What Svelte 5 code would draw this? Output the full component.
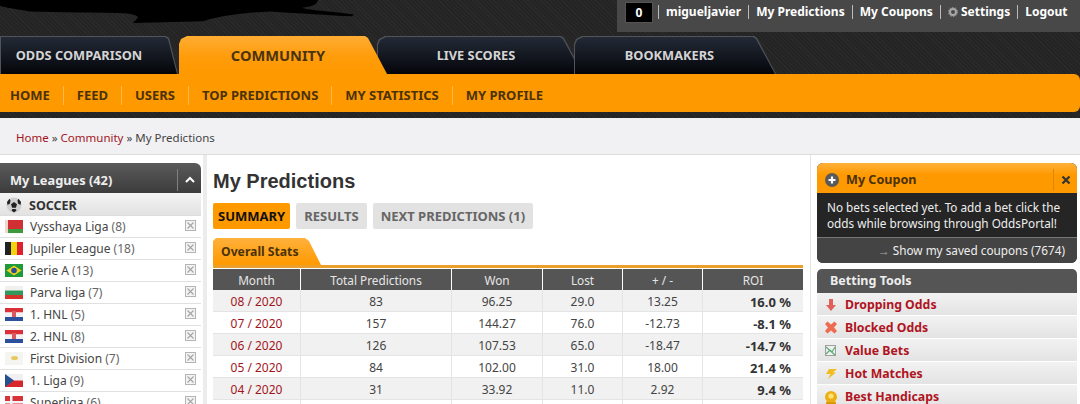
<script>
  const mainTabs = [
    { label: 'ODDS COMPARISON', cls: 'odds' },
    { label: 'COMMUNITY', cls: 'community' },
    { label: 'LIVE SCORES', cls: 'live' },
    { label: 'BOOKMAKERS', cls: 'books' }
  ];
  const subNav = ['HOME', 'FEED', 'USERS', 'TOP PREDICTIONS', 'MY STATISTICS', 'MY PROFILE'];
  const leagues = [
    { flag: 'by', name: 'Vysshaya Liga', count: 8 },
    { flag: 'be', name: 'Jupiler League', count: 18 },
    { flag: 'br', name: 'Serie A', count: 13 },
    { flag: 'bg', name: 'Parva liga', count: 7 },
    { flag: 'hr', name: '1. HNL', count: 5 },
    { flag: 'hr', name: '2. HNL', count: 8 },
    { flag: 'cy', name: 'First Division', count: 7 },
    { flag: 'cz', name: '1. Liga', count: 9 },
    { flag: 'dk', name: 'Superliga', count: 6 }
  ];
  const stats = [
    ['08 / 2020', '83', '96.25', '29.0', '13.25', '16.0 %'],
    ['07 / 2020', '157', '144.27', '76.0', '-12.73', '-8.1 %'],
    ['06 / 2020', '126', '107.53', '65.0', '-18.47', '-14.7 %'],
    ['05 / 2020', '84', '102.00', '31.0', '18.00', '21.4 %'],
    ['04 / 2020', '31', '33.92', '11.0', '2.92', '9.4 %'],
    ['', '', '', '', '', '']
  ];
  const tools = ['Dropping Odds', 'Blocked Odds', 'Value Bets', 'Hot Matches', 'Best Handicaps'];
</script>

{#snippet flag(code)}
  <svg class="flag" viewBox="0 0 18 13" aria-hidden="true">
    {#if code === 'by'}
      <rect width="18" height="13" fill="#d22f35" />
      <rect y="9" width="18" height="4" fill="#3c9a3c" />
      <rect width="3" height="13" fill="#f3d5d0" />
    {:else if code === 'be'}
      <rect width="6" height="13" fill="#222" />
      <rect x="6" width="6" height="13" fill="#f5d40f" />
      <rect x="12" width="6" height="13" fill="#e0202c" />
    {:else if code === 'br'}
      <rect width="18" height="13" fill="#1f9a3a" />
      <polygon points="9,1.5 16.5,6.5 9,11.5 1.5,6.5" fill="#f0d020" />
      <circle cx="9" cy="6.5" r="2.8" fill="#2a4f94" />
    {:else if code === 'bg'}
      <rect width="18" height="4.5" fill="#f0f0ec" />
      <rect y="4.5" width="18" height="4.5" fill="#2f9a5c" />
      <rect y="9" width="18" height="4" fill="#d5342a" />
    {:else if code === 'hr'}
      <rect width="18" height="4.5" fill="#dc3038" />
      <rect y="4.5" width="18" height="4.5" fill="#f2f2f2" />
      <rect y="9" width="18" height="4" fill="#2c4f9e" />
      <rect x="7" y="3" width="4" height="6" fill="#d85a60" />
    {:else if code === 'cy'}
      <rect width="18" height="13" fill="#f4f4f0" />
      <ellipse cx="9.5" cy="6" rx="3.5" ry="2" fill="#e8c860" />
    {:else if code === 'cz'}
      <rect width="18" height="6.5" fill="#f0f0f2" />
      <rect y="6.5" width="18" height="6.5" fill="#d8262e" />
      <polygon points="0,0 9,6.5 0,13" fill="#27508f" />
    {:else}
      <rect width="18" height="13" fill="#d8323a" />
      <rect x="5" width="2.5" height="13" fill="#f2f2f2" />
      <rect y="5" width="18" height="2.5" fill="#f2f2f2" />
    {/if}
  </svg>
{/snippet}

{#snippet toolIcon(i)}
  <svg class="tool-icon" viewBox="0 0 14 16" aria-hidden="true">
    {#if i === 0}
      <path d="M5 2h4v6h3l-5 6-5-6h3z" fill="#e0605a" />
    {:else if i === 1}
      <path d="M1 4l2.500-2.500 3.500 3 3.500-3L13 4l-3 3.500 3 3.500-2.500 2.500-3.500-3-3.500 3L1 11l3-3.500z" fill="#ee6a50" />
    {:else if i === 2}
      <rect x="1.500" y="2.500" width="10" height="10" fill="#eef2ee" stroke="#a0a0a0" />
      <path d="M2 4l9 8M2 11l4-4 2 2 3-5" fill="none" stroke="#5fa87a" stroke-width="1.200" />
    {:else if i === 3}
      <path d="M5 3h8L9 6.500h3L4 13l2.500-5H2z" fill="#f0bd20" />
    {:else}
      <circle cx="7" cy="8" r="6" fill="#eeb010" />
      <circle cx="7" cy="7" r="2.600" fill="#fbe27a" />
      <rect x="2" y="13" width="10" height="3" fill="#d89a08" />
    {/if}
  </svg>
{/snippet}

<div class="page">
  <header class="top">
    <svg class="scribble" viewBox="0 0 360 26" preserveAspectRatio="none" aria-hidden="true">
      <path d="M0 0H318C317 5 312 7 302 8C310 11 335 12 354 15L352 17C330 16 300 14 270 12C250 13 225 15 203 22L133 24C135 20 145 17 128 14C100 13 60 13 30 12C15 9 5 8 0 6Z" fill="#000" />
    </svg>
    <div class="userbar">
      <span class="counter">0</span>
      <a href="#u" class="first">migueljavier</a>
      <a href="#p">My Predictions</a>
      <a href="#c">My Coupons</a>
      <a href="#s">
        <svg class="gear" viewBox="0 0 10 10" aria-hidden="true">
          <circle cx="5" cy="5" r="3" fill="none" stroke="#a8a8a8" stroke-width="2" />
          <circle cx="5" cy="5" r="4.600" fill="none" stroke="#a8a8a8" stroke-width="1" stroke-dasharray="1.400 1.500" />
        </svg>
        Settings
      </a>
      <a href="#l">Logout</a>
    </div>
    <nav class="tabs">
      {#each mainTabs as tab}
        <a href="#t" class="tab {tab.cls}"><span>{tab.label}</span></a>
      {/each}
    </nav>
    <nav class="subnav">
      {#each subNav as item}
        <a href="#n">{item}</a>
      {/each}
    </nav>
  </header>

  <div class="crumbs">
    <a href="#h">Home</a> » <a href="#c">Community</a> » My Predictions
  </div>

  <div class="columns">
    <aside class="left">
      <div class="box-head">
        <span>My Leagues (42)</span>
        <span class="collapse">
          <svg viewBox="0 0 10 7" width="10" height="7" aria-hidden="true">
            <path d="M1 6l4-4 4 4" fill="none" stroke="#fff" stroke-width="2" />
          </svg>
        </span>
      </div>
      <div class="sport">
        <svg class="ball" viewBox="0 0 16 16" aria-hidden="true">
          <circle cx="8" cy="8" r="7.500" fill="#cfcfcf" />
          <path d="M8 5l3 2.200-1.100 3.500H6.100L5 7.200zM3.500 1.800L1 5l.5 3 2.500-1.500.5-3zM12.500 1.800L15 5l-.5 3L12 6.500l-.5-3zM5.500 13.500l2.500 2 2.500-2-1-1.500h-3z" fill="#222" />
        </svg>
        SOCCER
      </div>
      <ul class="leagues">
        {#each leagues as league}
          <li>
            {@render flag(league.flag)}
            <span class="league-name">{league.name} <span class="count">({league.count})</span></span>
            <svg class="remove" viewBox="0 0 11 11" aria-hidden="true">
              <rect x=".5" y=".5" width="10" height="10" fill="#f3f3f3" stroke="#b4b4b4" />
              <path d="M2.500 2.500l6 6M8.500 2.500l-6 6" stroke="#a4a4a4" stroke-width="1.100" />
            </svg>
          </li>
        {/each}
      </ul>
    </aside>

    <main class="content">
      <h1>My Predictions</h1>
      <div class="pills">
        <a href="#s" class="pill active">SUMMARY</a>
        <a href="#r" class="pill">RESULTS</a>
        <a href="#x" class="pill">NEXT PREDICTIONS (1)</a>
      </div>
      <div class="stats-tab"><span>Overall Stats</span></div>
      <table>
        <thead>
          <tr>
            <th class="c-month">Month</th>
            <th class="c-total">Total Predictions</th>
            <th class="c-won">Won</th>
            <th class="c-lost">Lost</th>
            <th class="c-diff">+ / -</th>
            <th>ROI</th>
          </tr>
        </thead>
        <tbody>
          {#each stats as row}
            <tr>
              <td class="month">{row[0]}</td>
              <td>{row[1]}</td>
              <td>{row[2]}</td>
              <td>{row[3]}</td>
              <td>{row[4]}</td>
              <td class="roi">{row[5]}</td>
            </tr>
          {/each}
        </tbody>
      </table>
    </main>

    <aside class="right">
      <section class="coupon">
        <div class="coupon-head">
          <svg class="plus" viewBox="0 0 14 14" aria-hidden="true">
            <circle cx="7" cy="7" r="7" fill="#5a5a5a" />
            <path d="M7 3.500v7M3.500 7h7" stroke="#fff" stroke-width="2.200" />
          </svg>
          <span class="coupon-title">My Coupon</span>
          <span class="coupon-close">
            <svg viewBox="0 0 10 10" width="10" height="10" aria-hidden="true">
              <path d="M1.500 1.500l7 7M8.500 1.500l-7 7" stroke="#333" stroke-width="2.200" />
            </svg>
          </span>
        </div>
        <p class="coupon-text">No bets selected yet. To add a bet click the odds while browsing through OddsPortal!</p>
        <a href="#saved" class="coupon-saved"><span class="arrow">→</span> Show my saved coupons (7674)</a>
      </section>
      <section class="tools">
        <h2>Betting Tools</h2>
        {#each tools as tool, i}
          <a href="#b" class="tool">{@render toolIcon(i)}{tool}</a>
        {/each}
      </section>
    </aside>
  </div>
</div>

<style>
  :global(body) {
    background: #fff;
    overflow: hidden;
  }

  .page {
    width: 1080px;
    height: 404px;
    overflow: hidden;
    font-family: "Noto Sans", sans-serif;
    font-size: 12px;
    color: #333;
  }

  a {
    text-decoration: none;
    color: inherit;
  }

  /* header */
  .top {
    position: relative;
    height: 118px;
    box-sizing: border-box;
    padding-top: 36px;
    background-color: #242424;
    background-image: repeating-linear-gradient(45deg, #2a2a2a 0 1px, transparent 1px 3px);
  }

  .scribble {
    position: absolute;
    left: 0;
    top: 0;
    width: 360px;
    height: 25px;
  }

  .userbar {
    position: absolute;
    right: 0;
    top: 0;
    width: 463px;
    height: 32px;
    box-sizing: border-box;
    padding: 0 0 8px 8px;
    display: flex;
    align-items: center;
    background: #484848;
    color: #fff;
    font-weight: bold;
    font-size: 12px;
  }

  .counter {
    width: 28px;
    height: 21px;
    margin-right: 5px;
    background: #000;
    border: 1px solid #555;
    box-sizing: border-box;
    text-align: center;
    line-height: 19px;
  }

  .userbar a {
    padding: 0 7px;
    border-left: 1px solid #bbb;
    line-height: 14px;
    white-space: nowrap;
  }

  .gear {
    width: 10px;
    height: 10px;
    vertical-align: -1px;
  }

  .tabs {
    display: flex;
    height: 38px;
    align-items: stretch;
  }

  .tab {
    position: relative;
    display: flex;
    align-items: center;
    justify-content: center;
    box-sizing: border-box;
    height: 38px;
    color: #d4d4d4;
    font-weight: bold;
    font-size: 12.800px;
    background: #50545a;
    clip-path: polygon(0 8px, 2px 3px, 8px 0, calc(100% - 22px) 0, calc(100% - 19px) 2px, 100% 100%, 0 100%);
  }

  /* inner face of the tab, the parent shows through as its thin outline */
  .tab::before {
    content: '';
    position: absolute;
    inset: 1px 1px 0 1px;
    background: linear-gradient(#232a36, #04050a);
    clip-path: inherit;
  }

  .tab span {
    position: relative;
  }

  .odds {
    width: 178px;
    padding-right: 20px;
    clip-path: polygon(0 0, calc(100% - 12px) 0, calc(100% - 9px) 2px, 100% 100%, 0 100%);
  }

  .community {
    width: 208px;
    margin-left: 1px;
    padding-right: 10px;
    z-index: 2;
    color: #4a3410;
    font-size: 14.600px;
    background: linear-gradient(#ffad33 0, #ff9c0a 55%, #ff9900 100%);
  }

  .community::before {
    display: none;
  }

  .live {
    width: 206px;
    margin-left: -10px;
    padding-right: 8px;
  }

  .books {
    width: 202px;
    margin-left: -9px;
    padding-right: 11px;
  }

  .subnav {
    display: flex;
    align-items: center;
    height: 38px;
    box-sizing: border-box;
    padding: 4px 0 0 10px;
    background: #ff9900;
    border-radius: 0 6px 6px 0;
    color: #4b3208;
    font-weight: bold;
    font-size: 13px;
  }

  .subnav a {
    padding: 0 13px;
    line-height: 19px;
    border-left: 1px solid #ffb84d;
    white-space: nowrap;
  }

  .subnav a:first-child {
    padding-left: 0;
    border-left: 0;
  }

  /* breadcrumbs */
  .crumbs {
    height: 37px;
    box-sizing: border-box;
    padding: 12px 16px 0;
    background: #f1f0f3;
    border-bottom: 1px solid #dcdcdc;
    color: #444;
    font-size: 11.500px;
  }

  .crumbs a {
    color: #a3161c;
  }

  /* columns */
  .columns {
    display: flex;
    align-items: flex-start;
  }

  .left {
    width: 201px;
    flex: none;
    padding-top: 8px;
  }

  .box-head {
    display: flex;
    align-items: center;
    justify-content: space-between;
    height: 30px;
    box-sizing: border-box;
    padding: 3px 0 0 10px;
    border-radius: 0 6px 0 0;
    background: linear-gradient(#5a5a5a, #3c3c3c);
    color: #eee;
    font-weight: bold;
    font-size: 12.800px;
  }

  .collapse {
    display: flex;
    align-items: center;
    justify-content: center;
    width: 23px;
    height: 22px;
    border-left: 1px solid #808080;
  }

  .sport {
    display: flex;
    align-items: center;
    gap: 7px;
    height: 23px;
    box-sizing: border-box;
    padding: 2px 0 0 6px;
    background: linear-gradient(#f4f4f4, #e2e2e2);
    border-bottom: 1px solid #ddd;
    font-weight: bold;
    font-size: 12.500px;
    color: #333;
  }

  .ball {
    width: 16px;
    height: 16px;
  }

  .leagues {
    list-style: none;
    margin: 0;
    padding: 0;
  }

  .leagues li {
    display: flex;
    align-items: center;
    height: 22px;
    box-sizing: border-box;
    padding: 0 5px;
    border-bottom: 1px solid #e0e0e0;
    color: #444;
  }

  .flag {
    width: 18px;
    height: 13px;
    flex: none;
    margin-right: 7px;
  }

  .league-name {
    flex: 1;
  }

  .count {
    color: #666;
  }

  .remove {
    width: 11px;
    height: 11px;
    margin-top: -3px;
  }

  /* main content */
  .content {
    width: 590px;
    flex: none;
    margin-left: 2px;
    padding: 0 7px 0 6px;
    min-height: 260px;
    border-left: 4px solid #ececec;
    border-right: 1px solid #e4e4e4;
  }

  h1 {
    margin: 14px 0 10px;
    font-family: "Liberation Sans", sans-serif;
    font-size: 20px;
    line-height: 24px;
    color: #333;
  }

  .pills {
    display: flex;
    gap: 6px;
  }

  .pill {
    height: 26px;
    line-height: 26px;
    padding: 0 8px;
    border-radius: 2px;
    background: #e2e2e2;
    color: #666;
    font-weight: bold;
    font-size: 13px;
  }

  .pill.active {
    padding: 0 5px;
    background: #ff9900;
    color: #111;
  }

  .stats-tab {
    display: flex;
    align-items: center;
    width: 108px;
    height: 27px;
    margin-top: 9px;
    padding-left: 8px;
    box-sizing: border-box;
    background: linear-gradient(#ffb13c, #ff9900);
    color: #4b3208;
    font-weight: bold;
    font-size: 12.200px;
    clip-path: polygon(0 3px, 3px 0, 92px 0, 96px 3px, 100% 100%, 0 100%);
  }

  table {
    width: 590px;
    border-collapse: separate;
    border-spacing: 0;
    table-layout: fixed;
    border-top: 3px solid #eba02c;
  }

  th {
    height: 22px;
    box-sizing: border-box;
    padding: 0;
    background: #555;
    color: #e6e6e6;
    font-weight: normal;
    font-size: 11.800px;
    border-left: 1px solid #fff;
    border-top: 1px solid #fff;
  }

  th:first-child {
    border-left: 0;
  }

  .c-month { width: 87px; }
  .c-total { width: 151px; }
  .c-won { width: 91px; }
  .c-lost { width: 80px; }
  .c-diff { width: 80px; }

  td {
    height: 22px;
    box-sizing: border-box;
    padding: 2px 0 0;
    text-align: center;
    color: #444;
    border-left: 1px solid #e4e4e4;
    border-bottom: 1px solid #e4e4e4;
  }

  td:first-child {
    border-left: 0;
  }

  tbody tr:nth-child(odd) td {
    background: #f1f1f1;
  }

  .month {
    color: #a3161c;
  }

  td.roi {
    text-align: right;
    padding-right: 12px;
    font-weight: bold;
    font-size: 13px;
    color: #333;
  }

  /* right */
  .right {
    width: 260px;
    flex: none;
    margin-left: 6px;
    padding-top: 8px;
  }

  .coupon {
    border-radius: 6px;
    overflow: hidden;
    background: #252525;
  }

  .coupon-head {
    display: flex;
    align-items: center;
    height: 30px;
    box-sizing: border-box;
    padding: 3px 0 0 8px;
    background: linear-gradient(#ffb13c 0, #ff9900 40%);
    color: #4b3208;
    font-weight: bold;
    font-size: 12.600px;
  }

  .plus {
    width: 14px;
    height: 14px;
    margin-right: 7px;
  }

  .coupon-title {
    flex: 1;
  }

  .coupon-close {
    display: flex;
    align-items: center;
    justify-content: center;
    width: 23px;
    height: 22px;
    border-left: 1px solid #d8870a;
  }

  .coupon-text {
    margin: 0;
    height: 44px;
    box-sizing: border-box;
    padding: 6px 10px 0;
    color: #eee;
    font-size: 11.750px;
    line-height: 16px;
  }

  .coupon-saved {
    display: block;
    height: 26px;
    box-sizing: border-box;
    line-height: 24px;
    padding-right: 12px;
    text-align: right;
    background: #444;
    border-top: 1px solid #777;
    color: #eee;
    font-size: 11.750px;
  }

  .arrow {
    color: #aaa;
  }

  .tools {
    margin-top: 6px;
  }

  .tools h2 {
    margin: 0;
    height: 24px;
    line-height: 24px;
    padding-left: 13px;
    border-radius: 5px 5px 0 0;
    background: #555;
    color: #eee;
    font-size: 12.500px;
    font-weight: bold;
  }

  .tool {
    display: flex;
    align-items: center;
    height: 23px;
    box-sizing: border-box;
    padding: 1px 0 0 7px;
    background: linear-gradient(#f2f2f2, #e3e3e3);
    border-bottom: 1px solid #fff;
    color: #b0141e;
    font-weight: bold;
    font-size: 12.300px;
  }

  .tool-icon {
    width: 14px;
    height: 16px;
    margin-right: 7px;
  }
</style>
